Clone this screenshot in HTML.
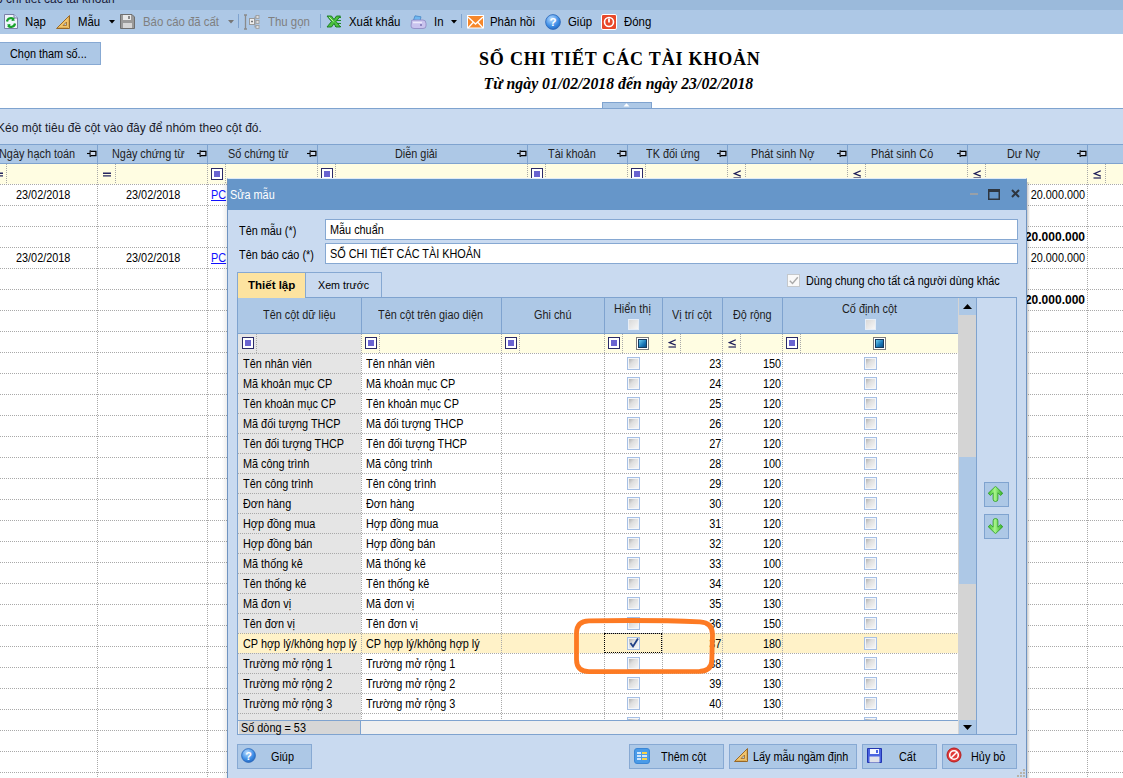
<!DOCTYPE html><html><head><meta charset="utf-8"><style>
*{margin:0;padding:0;box-sizing:border-box}
html,body{width:1123px;height:778px;overflow:hidden;background:#fff;position:relative;font-family:"Liberation Sans",sans-serif;font-size:12px;color:#000}
.ab{position:absolute}
.t{position:absolute;white-space:nowrap;line-height:1;transform:scaleX(.905);transform-origin:0 0;margin-top:-1px}
.n{transform:none;margin-top:0}
.r{transform-origin:100% 0}
.tb{font-size:12.6px;top:17px}
.gray{color:#8a8a8a}
.hd{top:149px;color:#1e1e1e}
.dotv{position:absolute;width:1px;background-image:linear-gradient(to bottom,#a9a9a9 50%,transparent 50%);background-size:1px 2px}
.doth{position:absolute;height:1px;background-image:linear-gradient(to right,#a9a9a9 50%,transparent 50%);background-size:2px 1px}
.sep{position:absolute;width:1px;background:#7fa3cf}
.fsq{position:absolute;width:12px;height:12px;border:1.5px solid #2a2a68;background:#fff}
.fsq:after{content:"";position:absolute;left:1.5px;top:1.5px;width:6px;height:6px;background:#6a64d0}
.le{position:absolute;font-size:11px;text-decoration:underline;color:#101040}
.cb{position:absolute;width:13px;height:13px;border:1px solid #a6bfe4;background:#f4f6f9}
.cb:after{content:"";position:absolute;left:1px;top:1px;width:9px;height:9px;background:linear-gradient(135deg,#b2b2b2 0%,#dedede 38%,#f6f6f6 100%)}
.btn{position:absolute;background:#adc8e6;border:1px solid #87a9d3}
</style></head><body>
<div class="ab" style="left:0;top:0;width:1123px;height:10px;background:#9bbadb;overflow:hidden"><span class="t n" style="left:-12px;top:-7px;font-size:12px;color:#1a1a3a">Sổ chi tiết các tài khoản</span></div>
<div class="ab" style="left:0;top:10px;width:1123px;height:24px;background:#adc8e6"></div>
<svg class="ab" style="left:4px;top:14px" width="14" height="15" viewBox="0 0 14 15"><path d="M0.5 0.5H10L13.5 4V14.5H0.5Z" fill="#eef4fb" stroke="#7b7fa8"/><path d="M10 0.5V4H13.5" fill="#cfe0f5" stroke="#7b7fa8"/><path d="M3 7.5A4 4 0 0 1 10 5.5" stroke="#17a12a" stroke-width="2.2" fill="none"/><path d="M8.5 3.5L11 6.5L7.5 7Z" fill="#17a12a"/><path d="M11 9.5A4 4 0 0 1 4 11.5" stroke="#17a12a" stroke-width="2.2" fill="none"/><path d="M5.5 13.5L3 10.5L6.5 10Z" fill="#17a12a"/></svg>
<span class="t tb" style="left:25px">Nạp</span>
<svg class="ab" style="left:56px;top:15px" width="14" height="14" viewBox="0 0 14 14"><path d="M13.5 0.5V13.5H0.5Z" fill="#f2c46a" stroke="#9a6a2a"/><path d="M10.5 7V10.5H7Z" fill="#adc8e6" stroke="#9a6a2a" stroke-width="0.8"/><path d="M3 12.5v1M5 12.5v1M7 12.5v1M9 12.5v1M11 12.5v1M12.5 3h1M12.5 5h1M12.5 7h1M12.5 9h1M12.5 11h1" stroke="#8a5a1a" stroke-width="0.8"/></svg>
<span class="t tb" style="left:78px">Mẫu</span>
<svg class="ab" style="left:109px;top:20px" width="6" height="4" viewBox="0 0 6 4"><path d="M0 0H6L3 3.5Z" fill="#000"/></svg>
<svg class="ab" style="left:120px;top:14px" width="15" height="15" viewBox="0 0 15 15"><path d="M0.5 0.5H12L14.5 3V14.5H0.5Z" fill="#9a9a9a" stroke="#6f6f6f"/><rect x="3" y="1" width="8" height="5" fill="#e9e9e9"/><rect x="8" y="2" width="2" height="3" fill="#8a8a8a"/><rect x="3" y="9" width="9" height="5" fill="#d6d6d6"/></svg>
<span class="t tb gray" style="left:143px;color:#7f7f7f">Báo cáo đã cất</span>
<svg class="ab" style="left:228px;top:20px" width="6" height="4" viewBox="0 0 6 4"><path d="M0 0H6L3 3.5Z" fill="#777"/></svg>
<div class="ab" style="left:238px;top:14px;width:1px;height:14px;background:#7fa3cf"></div>
<svg class="ab" style="left:243px;top:14px" width="17" height="16" viewBox="0 0 17 16"><path d="M1 1h3M2.5 1v14M1 15h3" stroke="#8a8a8a" stroke-width="1.3" fill="none"/><rect x="6.5" y="4.5" width="5" height="6" fill="#eee" stroke="#999"/><path d="M8 7.5h2M9 6.5v2" stroke="#777"/><rect x="13" y="1.5" width="3" height="3" fill="#ddd" stroke="#999" stroke-width=".8"/><rect x="13" y="6.5" width="3" height="3" fill="#ddd" stroke="#999" stroke-width=".8"/><rect x="13" y="11.5" width="3" height="3" fill="#ddd" stroke="#999" stroke-width=".8"/><path d="M11.5 3h1.5M11.5 13h1.5M12 3v10" stroke="#999" stroke-width=".8"/></svg>
<span class="t tb" style="left:268px;color:#7f7f7f">Thu gọn</span>
<div class="ab" style="left:320px;top:14px;width:1px;height:14px;background:#7fa3cf"></div>
<svg class="ab" style="left:326px;top:15px" width="16" height="13" viewBox="0 0 16 13"><path d="M9 2.5h6M10 5.5h5M10.5 8.5h4.5M9 11.5h6" stroke="#1f8a2a" stroke-width="1.2"/><path d="M1 1H5.5L8 4.5L10.5 1H14.5L10 6.5L14.5 12H10L8 8.5L5.5 12H1L5.5 6.5Z" fill="#4cc23f" stroke="#17761f" stroke-width="0.9" stroke-linejoin="round"/><path d="M3 2L7.5 6.5" stroke="#b6f3a0" stroke-width="1"/></svg>
<span class="t tb" style="left:349px">Xuất khẩu</span>
<svg class="ab" style="left:410px;top:15px" width="17" height="14" viewBox="0 0 17 14"><path d="M3.5 5L5 0.8L11 1.8L10 6Z" fill="#6fb7f0" stroke="#3f7fc0" stroke-width=".7"/><path d="M1.5 6.5Q1 5 3 5H13Q16 5 16 8.5V11Q16 13.5 13 13.5H4Q1 13.5 1 11Z" fill="#c9c3ee" stroke="#8d86c0" stroke-width=".8"/><path d="M3 7.5H12" stroke="#ece9fb" stroke-width="1.5"/><rect x="10" y="9" width="2" height="2" fill="#8d86c0"/></svg>
<span class="t tb" style="left:434px">In</span>
<svg class="ab" style="left:451px;top:20px" width="6" height="4" viewBox="0 0 6 4"><path d="M0 0H6L3 3.5Z" fill="#000"/></svg>
<div class="ab" style="left:461px;top:14px;width:1px;height:14px;background:#7fa3cf"></div>
<svg class="ab" style="left:467px;top:15px" width="17" height="14" viewBox="0 0 17 14"><rect x="0.5" y="0.5" width="16" height="12.5" fill="#f6872a" stroke="#fff"/><path d="M1 2L8.5 9L16 2M1 13L6 7.5M16 13L11 7.5" stroke="#fff" stroke-width="1.3" fill="none"/></svg>
<span class="t tb" style="left:490px">Phản hồi</span>
<svg class="ab" style="left:545px;top:14px" width="16" height="16" viewBox="0 0 16 16"><defs><radialGradient id="hg545" cx=".4" cy=".3" r=".8"><stop offset="0" stop-color="#b8dbff"/><stop offset=".6" stop-color="#3d8ee6"/><stop offset="1" stop-color="#1f5fb8"/></radialGradient></defs><circle cx="8.0" cy="8.0" r="7.4" fill="url(#hg545)" stroke="#2a66b8" stroke-width=".8"/><text x="8.0" y="12.48" font-family="Liberation Sans" font-weight="bold" font-size="11.52" fill="#fff" text-anchor="middle">?</text></svg>
<span class="t tb" style="left:568px">Giúp</span>
<svg class="ab" style="left:601px;top:14px" width="16" height="16" viewBox="0 0 16 16"><rect x="0.5" y="0.5" width="15" height="15" rx="1.5" fill="#e8482a" stroke="#fff"/><circle cx="8" cy="8" r="4.5" fill="none" stroke="#fff" stroke-width="1.6"/><path d="M8 4.5v4" stroke="#fff" stroke-width="1.8"/></svg>
<span class="t tb" style="left:624px">Đóng</span>
<div class="btn" style="left:-1px;top:42px;width:102px;height:23px"></div>
<span class="t" style="left:10px;top:49px">Chọn tham số...</span>
<span class="t n" style="left:479px;top:50px;font-family:'Liberation Serif',serif;font-weight:bold;font-size:18px;letter-spacing:0.8px">SỔ CHI TIẾT CÁC TÀI KHOẢN</span>
<span class="t n" style="left:483.5px;top:76px;font-family:'Liberation Serif',serif;font-weight:bold;font-style:italic;font-size:15.8px">Từ ngày 01/02/2018 đến ngày 23/02/2018</span>
<div class="ab" style="left:602px;top:102px;width:50px;height:7px;background:#adc8e6;border:1px solid #7fa3cf;border-bottom:none"></div>
<svg class="ab" style="left:623px;top:103px" width="7" height="4" viewBox="0 0 7 4"><path d="M0.5 3.6L3.5 0.3L6.5 3.6Z" fill="#fff"/></svg>
<div class="ab" style="left:0;top:108px;width:1123px;height:37px;background:#c9daf0;border-top:1px solid #7fa3cf"></div>
<span class="t n" style="left:-3px;top:122px;font-size:12px;color:#1a1a2a">Kéo một tiêu đề cột vào đây để nhóm theo cột đó.</span>
<div class="ab" style="left:0;top:144px;width:1123px;height:20px;background:#adc8e6;border-top:1px solid #7fa3cf;border-bottom:1px solid #7fa3cf"></div>
<div class="sep" style="left:97px;top:145px;height:18px"></div>
<div class="sep" style="left:207px;top:145px;height:18px"></div>
<div class="sep" style="left:317px;top:145px;height:18px"></div>
<div class="sep" style="left:527px;top:145px;height:18px"></div>
<div class="sep" style="left:627px;top:145px;height:18px"></div>
<div class="sep" style="left:727px;top:145px;height:18px"></div>
<div class="sep" style="left:847px;top:145px;height:18px"></div>
<div class="sep" style="left:967px;top:145px;height:18px"></div>
<div class="sep" style="left:1087px;top:145px;height:18px"></div>
<span class="t hd" style="left:-1px">Ngày hạch toán</span>
<span class="t hd" style="left:112px">Ngày chứng từ</span>
<span class="t hd" style="left:228px">Số chứng từ</span>
<span class="t hd" style="left:395px">Diễn giải</span>
<span class="t hd" style="left:548px">Tài khoản</span>
<span class="t hd" style="left:646px">TK đối ứng</span>
<span class="t hd" style="left:751px">Phát sinh Nợ</span>
<span class="t hd" style="left:871px">Phát sinh Có</span>
<span class="t hd" style="left:1007px">Dư Nợ</span>
<svg class="ab" style="left:87px;top:150px" width="10" height="8" viewBox="0 0 10 8"><path d="M0 3.5H3" stroke="#000" stroke-width="1.1"/><path d="M3.3 0.4V6.8" stroke="#000" stroke-width="1.5"/><path d="M3.6 1.3H8.9V5.7H3.6" fill="#cfdcee" stroke="#000" stroke-width="1.25"/></svg>
<svg class="ab" style="left:197px;top:150px" width="10" height="8" viewBox="0 0 10 8"><path d="M0 3.5H3" stroke="#000" stroke-width="1.1"/><path d="M3.3 0.4V6.8" stroke="#000" stroke-width="1.5"/><path d="M3.6 1.3H8.9V5.7H3.6" fill="#cfdcee" stroke="#000" stroke-width="1.25"/></svg>
<svg class="ab" style="left:307px;top:150px" width="10" height="8" viewBox="0 0 10 8"><path d="M0 3.5H3" stroke="#000" stroke-width="1.1"/><path d="M3.3 0.4V6.8" stroke="#000" stroke-width="1.5"/><path d="M3.6 1.3H8.9V5.7H3.6" fill="#cfdcee" stroke="#000" stroke-width="1.25"/></svg>
<svg class="ab" style="left:517px;top:150px" width="10" height="8" viewBox="0 0 10 8"><path d="M0 3.5H3" stroke="#000" stroke-width="1.1"/><path d="M3.3 0.4V6.8" stroke="#000" stroke-width="1.5"/><path d="M3.6 1.3H8.9V5.7H3.6" fill="#cfdcee" stroke="#000" stroke-width="1.25"/></svg>
<svg class="ab" style="left:617px;top:150px" width="10" height="8" viewBox="0 0 10 8"><path d="M0 3.5H3" stroke="#000" stroke-width="1.1"/><path d="M3.3 0.4V6.8" stroke="#000" stroke-width="1.5"/><path d="M3.6 1.3H8.9V5.7H3.6" fill="#cfdcee" stroke="#000" stroke-width="1.25"/></svg>
<svg class="ab" style="left:717px;top:150px" width="10" height="8" viewBox="0 0 10 8"><path d="M0 3.5H3" stroke="#000" stroke-width="1.1"/><path d="M3.3 0.4V6.8" stroke="#000" stroke-width="1.5"/><path d="M3.6 1.3H8.9V5.7H3.6" fill="#cfdcee" stroke="#000" stroke-width="1.25"/></svg>
<svg class="ab" style="left:837px;top:150px" width="10" height="8" viewBox="0 0 10 8"><path d="M0 3.5H3" stroke="#000" stroke-width="1.1"/><path d="M3.3 0.4V6.8" stroke="#000" stroke-width="1.5"/><path d="M3.6 1.3H8.9V5.7H3.6" fill="#cfdcee" stroke="#000" stroke-width="1.25"/></svg>
<svg class="ab" style="left:957px;top:150px" width="10" height="8" viewBox="0 0 10 8"><path d="M0 3.5H3" stroke="#000" stroke-width="1.1"/><path d="M3.3 0.4V6.8" stroke="#000" stroke-width="1.5"/><path d="M3.6 1.3H8.9V5.7H3.6" fill="#cfdcee" stroke="#000" stroke-width="1.25"/></svg>
<svg class="ab" style="left:1077px;top:150px" width="10" height="8" viewBox="0 0 10 8"><path d="M0 3.5H3" stroke="#000" stroke-width="1.1"/><path d="M3.3 0.4V6.8" stroke="#000" stroke-width="1.5"/><path d="M3.6 1.3H8.9V5.7H3.6" fill="#cfdcee" stroke="#000" stroke-width="1.25"/></svg>
<div class="ab" style="left:0;top:164px;width:1123px;height:20px;background:#fffde2"></div>
<svg class="ab" style="left:-5px;top:171px" width="9" height="7" viewBox="0 0 9 7"><path d="M0 2.3H8M0 4.9H8" stroke="#25255f" stroke-width="1.4"/></svg>
<div class="dotv" style="left:6px;top:164px;height:20px"></div>
<svg class="ab" style="left:103px;top:171px" width="9" height="7" viewBox="0 0 9 7"><path d="M0 2.3H8M0 4.9H8" stroke="#25255f" stroke-width="1.4"/></svg>
<div class="dotv" style="left:115px;top:164px;height:20px"></div>
<div class="fsq" style="left:211px;top:168px"></div>
<div class="dotv" style="left:225px;top:164px;height:20px"></div>
<div class="fsq" style="left:321px;top:168px"></div>
<div class="dotv" style="left:335px;top:164px;height:20px"></div>
<div class="fsq" style="left:531px;top:168px"></div>
<div class="dotv" style="left:545px;top:164px;height:20px"></div>
<div class="fsq" style="left:631px;top:168px"></div>
<div class="dotv" style="left:645px;top:164px;height:20px"></div>
<svg class="ab" style="left:733px;top:170px" width="9" height="9" viewBox="0 0 9 9"><path d="M7.8 0.8L1.3 3.6L7.8 6.2" stroke="#1e1e58" stroke-width="1.25" fill="none"/><path d="M0.5 8H8" stroke="#1e1e58" stroke-width="1.2"/></svg>
<div class="dotv" style="left:745px;top:164px;height:20px"></div>
<svg class="ab" style="left:853px;top:170px" width="9" height="9" viewBox="0 0 9 9"><path d="M7.8 0.8L1.3 3.6L7.8 6.2" stroke="#1e1e58" stroke-width="1.25" fill="none"/><path d="M0.5 8H8" stroke="#1e1e58" stroke-width="1.2"/></svg>
<div class="dotv" style="left:865px;top:164px;height:20px"></div>
<svg class="ab" style="left:973px;top:170px" width="9" height="9" viewBox="0 0 9 9"><path d="M7.8 0.8L1.3 3.6L7.8 6.2" stroke="#1e1e58" stroke-width="1.25" fill="none"/><path d="M0.5 8H8" stroke="#1e1e58" stroke-width="1.2"/></svg>
<div class="dotv" style="left:985px;top:164px;height:20px"></div>
<svg class="ab" style="left:1093px;top:170px" width="9" height="9" viewBox="0 0 9 9"><path d="M7.8 0.8L1.3 3.6L7.8 6.2" stroke="#1e1e58" stroke-width="1.25" fill="none"/><path d="M0.5 8H8" stroke="#1e1e58" stroke-width="1.2"/></svg>
<div class="dotv" style="left:1105px;top:164px;height:20px"></div>
<div class="doth" style="left:0;top:184px;width:1123px"></div>
<div class="doth" style="left:0;top:205px;width:1123px"></div>
<div class="doth" style="left:0;top:226px;width:1123px"></div>
<div class="doth" style="left:0;top:247px;width:1123px"></div>
<div class="doth" style="left:0;top:268px;width:1123px"></div>
<div class="doth" style="left:0;top:289px;width:1123px"></div>
<div class="doth" style="left:0;top:310px;width:1123px"></div>
<div class="doth" style="left:0;top:331px;width:1123px"></div>
<div class="doth" style="left:0;top:352px;width:1123px"></div>
<div class="doth" style="left:0;top:373px;width:1123px"></div>
<div class="doth" style="left:0;top:394px;width:1123px"></div>
<div class="doth" style="left:0;top:415px;width:1123px"></div>
<div class="doth" style="left:0;top:436px;width:1123px"></div>
<div class="doth" style="left:0;top:457px;width:1123px"></div>
<div class="doth" style="left:0;top:478px;width:1123px"></div>
<div class="doth" style="left:0;top:499px;width:1123px"></div>
<div class="doth" style="left:0;top:520px;width:1123px"></div>
<div class="doth" style="left:0;top:541px;width:1123px"></div>
<div class="doth" style="left:0;top:562px;width:1123px"></div>
<div class="doth" style="left:0;top:583px;width:1123px"></div>
<div class="doth" style="left:0;top:604px;width:1123px"></div>
<div class="doth" style="left:0;top:625px;width:1123px"></div>
<div class="doth" style="left:0;top:646px;width:1123px"></div>
<div class="doth" style="left:0;top:667px;width:1123px"></div>
<div class="doth" style="left:0;top:688px;width:1123px"></div>
<div class="doth" style="left:0;top:709px;width:1123px"></div>
<div class="doth" style="left:0;top:730px;width:1123px"></div>
<div class="doth" style="left:0;top:751px;width:1123px"></div>
<div class="doth" style="left:0;top:772px;width:1123px"></div>
<div class="dotv" style="left:97px;top:164px;height:614px"></div>
<div class="dotv" style="left:207px;top:164px;height:614px"></div>
<div class="dotv" style="left:317px;top:164px;height:614px"></div>
<div class="dotv" style="left:527px;top:164px;height:614px"></div>
<div class="dotv" style="left:627px;top:164px;height:614px"></div>
<div class="dotv" style="left:727px;top:164px;height:614px"></div>
<div class="dotv" style="left:847px;top:164px;height:614px"></div>
<div class="dotv" style="left:967px;top:164px;height:614px"></div>
<div class="dotv" style="left:1087px;top:164px;height:614px"></div>
<span class="t" style="left:16px;top:190px">23/02/2018</span>
<span class="t" style="left:126px;top:190px">23/02/2018</span>
<span class="t" style="left:211px;top:190px;color:#1010ff;text-decoration:underline">PC</span>
<span class="t r" style="right:38px;top:190px">20.000.000</span>
<span class="t n" style="right:38px;top:231px;font-weight:bold;font-size:12px">20.000.000</span>
<span class="t" style="left:16px;top:253px">23/02/2018</span>
<span class="t" style="left:126px;top:253px">23/02/2018</span>
<span class="t" style="left:211px;top:253px;color:#1010ff;text-decoration:underline">PC</span>
<span class="t r" style="right:38px;top:253px">20.000.000</span>
<span class="t n" style="right:38px;top:294px;font-weight:bold;font-size:12px">20.000.000</span>
<div class="ab" style="left:1026px;top:182px;width:4px;height:600px;background:linear-gradient(to right,rgba(0,0,0,.28),rgba(0,0,0,0))"></div>
<div class="ab" style="left:222px;top:182px;width:5px;height:600px;background:linear-gradient(to left,rgba(0,0,0,.07),rgba(0,0,0,0))"></div>
<div class="ab" style="left:227px;top:178px;width:800px;height:610px;background:#c9daf0;border:1px solid #6f93c0;border-top:1px solid #e0ebf7"></div>
<div class="ab" style="left:228px;top:179px;width:798px;height:31px;background:#6696c9"></div>
<span class="t" style="left:230px;top:190px;color:#fff">Sửa mẫu</span>
<div class="ab" style="left:970px;top:193px;width:8px;height:2px;background:#98a0a8"></div>
<svg class="ab" style="left:988px;top:189px" width="12" height="11" viewBox="0 0 12 11"><rect x="0.75" y="0.75" width="10.5" height="9.5" fill="none" stroke="#2e3640" stroke-width="1.5"/><rect x="0" y="0" width="12" height="3" fill="#2e3640"/></svg>
<svg class="ab" style="left:1011px;top:189px" width="9" height="9" viewBox="0 0 9 9"><path d="M1 1L8 8M8 1L1 8" stroke="#2e3640" stroke-width="2"/></svg>
<span class="t" style="left:239px;top:226px">Tên mẫu (*)</span>
<span class="t" style="left:239px;top:250px">Tên báo cáo (*)</span>
<div class="ab" style="left:325px;top:219px;width:693px;height:21px;background:#fff;border:1px solid #86a8d2"></div>
<div class="ab" style="left:325px;top:243px;width:693px;height:21px;background:#fff;border:1px solid #86a8d2"></div>
<span class="t" style="left:330px;top:225px">Mẫu chuẩn</span>
<span class="t" style="left:330px;top:249px">SỔ CHI TIẾT CÁC TÀI KHOẢN</span>
<div class="ab" style="left:787px;top:274px;width:13px;height:13px;border:1px solid #c4c8cc;background:#f9f9f9"></div>
<svg class="ab" style="left:788px;top:275px" width="11" height="11" viewBox="0 0 11 11"><path d="M1.8 5.8L4.5 8.5L9.8 2.2" stroke="#aaaaaa" stroke-width="1.4" fill="none"/></svg>
<span class="t" style="left:806px;top:276px">Dùng chung cho tất cả người dùng khác</span>
<div class="ab" style="left:237px;top:272px;width:69px;height:26px;background:#fde3a0;border:1px solid #86a8d2;border-bottom:none"></div>
<div class="ab" style="left:305px;top:272px;width:77px;height:26px;background:#c9daf0;border:1px solid #86a8d2;border-bottom:none"></div>
<span class="t n" style="left:248px;top:280px;font-weight:bold;font-size:11.5px">Thiết lập</span>
<span class="t n" style="left:318px;top:280px;font-size:10.7px">Xem trước</span>
<div class="ab" style="left:237px;top:297px;width:780px;height:438px;background:#fff;border:1px solid #7fa3cf"></div>
<div class="ab" style="left:238px;top:297px;width:67px;height:1px;background:#fde3a0"></div>
<div class="ab" style="left:238px;top:298px;width:720px;height:36px;background:#adc8e6;border-bottom:1px solid #7fa3cf"></div>
<div class="sep" style="left:361px;top:298px;height:35px"></div>
<div class="sep" style="left:501px;top:298px;height:35px"></div>
<div class="sep" style="left:604px;top:298px;height:35px"></div>
<div class="sep" style="left:662px;top:298px;height:35px"></div>
<div class="sep" style="left:722px;top:298px;height:35px"></div>
<div class="sep" style="left:782px;top:298px;height:35px"></div>
<span class="t" style="left:263px;top:310px;color:#1e1e1e">Tên cột dữ liệu</span>
<span class="t" style="left:378px;top:310px;color:#1e1e1e">Tên cột trên giao diện</span>
<span class="t" style="left:534px;top:310px;color:#1e1e1e">Ghi chú</span>
<span class="t" style="left:672px;top:310px;color:#1e1e1e">Vị trí cột</span>
<span class="t" style="left:733px;top:310px;color:#1e1e1e">Độ rộng</span>
<span class="t" style="left:614px;top:304px;color:#1e1e1e">Hiển thị</span>
<span class="t" style="left:842px;top:304px;color:#1e1e1e">Cố định cột</span>
<div class="ab" style="left:628px;top:319px;width:11px;height:11px;border:1px solid #e6eef8;background:linear-gradient(135deg,#d9d9d9,#f7f7f7)"></div>
<div class="ab" style="left:865px;top:319px;width:11px;height:11px;border:1px solid #e6eef8;background:linear-gradient(135deg,#d9d9d9,#f7f7f7)"></div>
<div class="ab" style="left:238px;top:334px;width:720px;height:19px;background:#fffde2"></div>
<div class="ab" style="left:238px;top:334px;width:123px;height:386px;background:#e5e5e5"></div>
<div class="fsq" style="left:242px;top:337px"></div>
<div class="dotv" style="left:256px;top:334px;height:19px"></div>
<div class="fsq" style="left:365px;top:337px"></div>
<div class="dotv" style="left:379px;top:334px;height:19px"></div>
<div class="fsq" style="left:505px;top:337px"></div>
<div class="dotv" style="left:519px;top:334px;height:19px"></div>
<div class="fsq" style="left:608px;top:337px"></div>
<div class="dotv" style="left:622px;top:334px;height:19px"></div>
<div class="fsq" style="left:786px;top:337px"></div>
<div class="dotv" style="left:800px;top:334px;height:19px"></div>
<div class="ab" style="left:636px;top:337px;width:13px;height:13px;border:1px solid #7a7a7a;background:#fff;padding:1px"><div style="width:9px;height:9px;border:1px solid #153a5c;background:linear-gradient(135deg,#6fd0f2,#1a78b8 60%,#0c4f86)"></div></div>
<div class="ab" style="left:873px;top:337px;width:13px;height:13px;border:1px solid #7a7a7a;background:#fff;padding:1px"><div style="width:9px;height:9px;border:1px solid #153a5c;background:linear-gradient(135deg,#6fd0f2,#1a78b8 60%,#0c4f86)"></div></div>
<svg class="ab" style="left:668px;top:339px" width="9" height="9" viewBox="0 0 9 9"><path d="M7.8 0.8L1.3 3.6L7.8 6.2" stroke="#1e1e58" stroke-width="1.25" fill="none"/><path d="M0.5 8H8" stroke="#1e1e58" stroke-width="1.2"/></svg>
<div class="dotv" style="left:680px;top:334px;height:19px"></div>
<svg class="ab" style="left:728px;top:339px" width="9" height="9" viewBox="0 0 9 9"><path d="M7.8 0.8L1.3 3.6L7.8 6.2" stroke="#1e1e58" stroke-width="1.25" fill="none"/><path d="M0.5 8H8" stroke="#1e1e58" stroke-width="1.2"/></svg>
<div class="dotv" style="left:740px;top:334px;height:19px"></div>
<div class="doth" style="left:238px;top:353px;width:720px"></div>
<span class="t" style="left:243px;top:359px">Tên nhân viên</span>
<span class="t" style="left:366px;top:359px">Tên nhân viên</span>
<span class="t r" style="right:402px;top:359px">23</span>
<span class="t r" style="right:342px;top:359px">150</span>
<div class="cb" style="left:627px;top:357px"></div>
<div class="cb" style="left:864px;top:357px"></div>
<div class="doth" style="left:238px;top:373px;width:720px"></div>
<span class="t" style="left:243px;top:379px">Mã khoản mục CP</span>
<span class="t" style="left:366px;top:379px">Mã khoản mục CP</span>
<span class="t r" style="right:402px;top:379px">24</span>
<span class="t r" style="right:342px;top:379px">120</span>
<div class="cb" style="left:627px;top:377px"></div>
<div class="cb" style="left:864px;top:377px"></div>
<div class="doth" style="left:238px;top:393px;width:720px"></div>
<span class="t" style="left:243px;top:399px">Tên khoản mục CP</span>
<span class="t" style="left:366px;top:399px">Tên khoản mục CP</span>
<span class="t r" style="right:402px;top:399px">25</span>
<span class="t r" style="right:342px;top:399px">120</span>
<div class="cb" style="left:627px;top:397px"></div>
<div class="cb" style="left:864px;top:397px"></div>
<div class="doth" style="left:238px;top:413px;width:720px"></div>
<span class="t" style="left:243px;top:419px">Mã đối tượng THCP</span>
<span class="t" style="left:366px;top:419px">Mã đối tượng THCP</span>
<span class="t r" style="right:402px;top:419px">26</span>
<span class="t r" style="right:342px;top:419px">120</span>
<div class="cb" style="left:627px;top:417px"></div>
<div class="cb" style="left:864px;top:417px"></div>
<div class="doth" style="left:238px;top:433px;width:720px"></div>
<span class="t" style="left:243px;top:439px">Tên đối tượng THCP</span>
<span class="t" style="left:366px;top:439px">Tên đối tượng THCP</span>
<span class="t r" style="right:402px;top:439px">27</span>
<span class="t r" style="right:342px;top:439px">120</span>
<div class="cb" style="left:627px;top:437px"></div>
<div class="cb" style="left:864px;top:437px"></div>
<div class="doth" style="left:238px;top:453px;width:720px"></div>
<span class="t" style="left:243px;top:459px">Mã công trình</span>
<span class="t" style="left:366px;top:459px">Mã công trình</span>
<span class="t r" style="right:402px;top:459px">28</span>
<span class="t r" style="right:342px;top:459px">100</span>
<div class="cb" style="left:627px;top:457px"></div>
<div class="cb" style="left:864px;top:457px"></div>
<div class="doth" style="left:238px;top:473px;width:720px"></div>
<span class="t" style="left:243px;top:479px">Tên công trình</span>
<span class="t" style="left:366px;top:479px">Tên công trình</span>
<span class="t r" style="right:402px;top:479px">29</span>
<span class="t r" style="right:342px;top:479px">120</span>
<div class="cb" style="left:627px;top:477px"></div>
<div class="cb" style="left:864px;top:477px"></div>
<div class="doth" style="left:238px;top:493px;width:720px"></div>
<span class="t" style="left:243px;top:499px">Đơn hàng</span>
<span class="t" style="left:366px;top:499px">Đơn hàng</span>
<span class="t r" style="right:402px;top:499px">30</span>
<span class="t r" style="right:342px;top:499px">120</span>
<div class="cb" style="left:627px;top:497px"></div>
<div class="cb" style="left:864px;top:497px"></div>
<div class="doth" style="left:238px;top:513px;width:720px"></div>
<span class="t" style="left:243px;top:519px">Hợp đồng mua</span>
<span class="t" style="left:366px;top:519px">Hợp đồng mua</span>
<span class="t r" style="right:402px;top:519px">31</span>
<span class="t r" style="right:342px;top:519px">120</span>
<div class="cb" style="left:627px;top:517px"></div>
<div class="cb" style="left:864px;top:517px"></div>
<div class="doth" style="left:238px;top:533px;width:720px"></div>
<span class="t" style="left:243px;top:539px">Hợp đồng bán</span>
<span class="t" style="left:366px;top:539px">Hợp đồng bán</span>
<span class="t r" style="right:402px;top:539px">32</span>
<span class="t r" style="right:342px;top:539px">120</span>
<div class="cb" style="left:627px;top:537px"></div>
<div class="cb" style="left:864px;top:537px"></div>
<div class="doth" style="left:238px;top:553px;width:720px"></div>
<span class="t" style="left:243px;top:559px">Mã thống kê</span>
<span class="t" style="left:366px;top:559px">Mã thống kê</span>
<span class="t r" style="right:402px;top:559px">33</span>
<span class="t r" style="right:342px;top:559px">100</span>
<div class="cb" style="left:627px;top:557px"></div>
<div class="cb" style="left:864px;top:557px"></div>
<div class="doth" style="left:238px;top:573px;width:720px"></div>
<span class="t" style="left:243px;top:579px">Tên thống kê</span>
<span class="t" style="left:366px;top:579px">Tên thống kê</span>
<span class="t r" style="right:402px;top:579px">34</span>
<span class="t r" style="right:342px;top:579px">120</span>
<div class="cb" style="left:627px;top:577px"></div>
<div class="cb" style="left:864px;top:577px"></div>
<div class="doth" style="left:238px;top:593px;width:720px"></div>
<span class="t" style="left:243px;top:599px">Mã đơn vị</span>
<span class="t" style="left:366px;top:599px">Mã đơn vị</span>
<span class="t r" style="right:402px;top:599px">35</span>
<span class="t r" style="right:342px;top:599px">130</span>
<div class="cb" style="left:627px;top:597px"></div>
<div class="cb" style="left:864px;top:597px"></div>
<div class="doth" style="left:238px;top:613px;width:720px"></div>
<span class="t" style="left:243px;top:619px">Tên đơn vị</span>
<span class="t" style="left:366px;top:619px">Tên đơn vị</span>
<span class="t r" style="right:402px;top:619px">36</span>
<span class="t r" style="right:342px;top:619px">150</span>
<div class="cb" style="left:627px;top:617px"></div>
<div class="cb" style="left:864px;top:617px"></div>
<div class="ab" style="left:238px;top:633px;width:720px;height:20px;background:#fff2c8"></div>
<div class="doth" style="left:238px;top:633px;width:720px"></div>
<span class="t" style="left:243px;top:639px">CP hợp lý/không hợp lý</span>
<span class="t" style="left:366px;top:639px">CP hợp lý/không hợp lý</span>
<span class="t r" style="right:402px;top:639px">37</span>
<span class="t r" style="right:342px;top:639px">180</span>
<div class="cb" style="left:627px;top:637px"></div>
<div class="cb" style="left:864px;top:637px"></div>
<div class="doth" style="left:238px;top:653px;width:720px"></div>
<span class="t" style="left:243px;top:659px">Trường mở rộng 1</span>
<span class="t" style="left:366px;top:659px">Trường mở rộng 1</span>
<span class="t r" style="right:402px;top:659px">38</span>
<span class="t r" style="right:342px;top:659px">130</span>
<div class="cb" style="left:627px;top:657px"></div>
<div class="cb" style="left:864px;top:657px"></div>
<div class="doth" style="left:238px;top:673px;width:720px"></div>
<span class="t" style="left:243px;top:679px">Trường mở rộng 2</span>
<span class="t" style="left:366px;top:679px">Trường mở rộng 2</span>
<span class="t r" style="right:402px;top:679px">39</span>
<span class="t r" style="right:342px;top:679px">130</span>
<div class="cb" style="left:627px;top:677px"></div>
<div class="cb" style="left:864px;top:677px"></div>
<div class="doth" style="left:238px;top:693px;width:720px"></div>
<span class="t" style="left:243px;top:699px">Trường mở rộng 3</span>
<span class="t" style="left:366px;top:699px">Trường mở rộng 3</span>
<span class="t r" style="right:402px;top:699px">40</span>
<span class="t r" style="right:342px;top:699px">130</span>
<div class="cb" style="left:627px;top:697px"></div>
<div class="cb" style="left:864px;top:697px"></div>
<div class="doth" style="left:238px;top:713px;width:720px"></div>
<div class="cb" style="left:627px;top:717px;height:3px"></div><div class="cb" style="left:864px;top:717px;height:3px"></div>
<div class="dotv" style="left:361px;top:334px;height:386px"></div>
<div class="dotv" style="left:501px;top:334px;height:386px"></div>
<div class="dotv" style="left:604px;top:334px;height:386px"></div>
<div class="dotv" style="left:662px;top:334px;height:386px"></div>
<div class="dotv" style="left:722px;top:334px;height:386px"></div>
<div class="dotv" style="left:782px;top:334px;height:386px"></div>
<div class="ab" style="left:604px;top:633px;width:58px;height:20px;border:1px dotted #000"></div>
<svg class="ab" style="left:628px;top:637px" width="12" height="12" viewBox="0 0 12 12"><path d="M2.5 6L5 9.5L10 1.5" stroke="#1f3f86" stroke-width="1.8" fill="none"/></svg>
<div class="ab" style="left:238px;top:720px;width:720px;height:14px;background:#efefef;border-top:1px solid #7fa3cf"></div>
<div class="ab" style="left:239px;top:721px;width:122px;height:13px;background:#d6d6d6;border-right:1px solid #7fa3cf"></div>
<span class="t" style="left:241px;top:723px">Số dòng = 53</span>
<div class="ab" style="left:958px;top:298px;width:18px;height:436px;background:#d4d4d4"></div>
<div class="ab" style="left:959px;top:298px;width:17px;height:17px;background:#adc8e6"></div>
<svg class="ab" style="left:963px;top:304px" width="9" height="5" viewBox="0 0 9 5"><path d="M0 5L4.5 0L9 5Z" fill="#000"/></svg>
<div class="ab" style="left:959px;top:457px;width:17px;height:127px;background:#adc8e6"></div>
<div class="ab" style="left:959px;top:720px;width:17px;height:14px;background:#adc8e6"></div>
<svg class="ab" style="left:963px;top:725px" width="9" height="5" viewBox="0 0 9 5"><path d="M0 0L9 0L4.5 5Z" fill="#000"/></svg>
<div class="ab" style="left:976px;top:297px;width:41px;height:438px;background:#c9daf0;border:1px solid #7fa3cf"></div>
<div class="ab" style="left:984px;top:482px;width:25px;height:25px;background:#adc8e6;border:1px solid #7fa3cf"></div>
<svg class="ab" style="left:988px;top:486px" width="15" height="16" viewBox="0 0 15 16"><defs><linearGradient id="ag482" x1="0" y1="0" x2="1" y2="0"><stop offset="0" stop-color="#3cbf2c"/><stop offset=".45" stop-color="#a8f58c"/><stop offset="1" stop-color="#2fae22"/></linearGradient></defs><g><path d="M7.5 0.3L14.8 7.3L12.6 9.5L9.9 6.8V13.2Q9.9 15.5 7.5 15.5Q5.1 15.5 5.1 13.2V6.8L2.4 9.5L0.2 7.3Z" fill="url(#ag482)" stroke="#2b9a1f" stroke-width=".8" stroke-linejoin="round"/></g></svg>
<div class="ab" style="left:984px;top:514px;width:25px;height:25px;background:#adc8e6;border:1px solid #7fa3cf"></div>
<svg class="ab" style="left:988px;top:518px" width="15" height="16" viewBox="0 0 15 16"><defs><linearGradient id="ag514" x1="0" y1="0" x2="1" y2="0"><stop offset="0" stop-color="#3cbf2c"/><stop offset=".45" stop-color="#a8f58c"/><stop offset="1" stop-color="#2fae22"/></linearGradient></defs><g transform="translate(0 16) scale(1 -1)"><path d="M7.5 0.3L14.8 7.3L12.6 9.5L9.9 6.8V13.2Q9.9 15.5 7.5 15.5Q5.1 15.5 5.1 13.2V6.8L2.4 9.5L0.2 7.3Z" fill="url(#ag514)" stroke="#2b9a1f" stroke-width=".8" stroke-linejoin="round"/></g></svg>
<div class="btn" style="left:237px;top:744px;width:75px;height:25px"></div>
<span class="t" style="left:271px;top:752px">Giúp</span>
<svg class="ab" style="left:241px;top:748px" width="15" height="15" viewBox="0 0 15 15"><defs><radialGradient id="hg241" cx=".4" cy=".3" r=".8"><stop offset="0" stop-color="#b8dbff"/><stop offset=".6" stop-color="#3d8ee6"/><stop offset="1" stop-color="#1f5fb8"/></radialGradient></defs><circle cx="7.5" cy="7.5" r="6.9" fill="url(#hg241)" stroke="#2a66b8" stroke-width=".8"/><text x="7.5" y="11.700000000000001" font-family="Liberation Sans" font-weight="bold" font-size="10.799999999999999" fill="#fff" text-anchor="middle">?</text></svg>
<div class="btn" style="left:629px;top:744px;width:95px;height:25px"></div>
<span class="t" style="left:661px;top:752px">Thêm cột</span>
<svg class="ab" style="left:634px;top:748px" width="16" height="16" viewBox="0 0 16 16"><rect x="0.5" y="0.5" width="15" height="15" rx="2.5" fill="#4a9be8" stroke="#3a86d6"/><rect x="3" y="4" width="4" height="2" fill="#cfe6fb"/><rect x="8" y="4" width="5" height="2" fill="#f7d24a"/><rect x="3" y="7" width="4" height="2" fill="#cfe6fb"/><rect x="8" y="7" width="5" height="2" fill="#cfe6fb"/><rect x="3" y="10" width="4" height="2" fill="#cfe6fb"/><rect x="8" y="10" width="5" height="2" fill="#f7d24a"/></svg>
<div class="btn" style="left:729px;top:744px;width:128px;height:25px"></div>
<span class="t" style="left:753px;top:752px">Lấy mẫu ngầm định</span>
<svg class="ab" style="left:734px;top:748px" width="14" height="14" viewBox="0 0 14 14"><path d="M13.5 0.5V13.5H0.5Z" fill="#f2c46a" stroke="#9a6a2a"/><path d="M10.5 7V10.5H7Z" fill="#adc8e6" stroke="#9a6a2a" stroke-width="0.8"/><path d="M3 12.5v1M5 12.5v1M7 12.5v1M9 12.5v1M11 12.5v1M12.5 3h1M12.5 5h1M12.5 7h1M12.5 9h1M12.5 11h1" stroke="#8a5a1a" stroke-width="0.8"/></svg>
<div class="btn" style="left:862px;top:744px;width:75px;height:25px"></div>
<span class="t" style="left:899px;top:752px">Cất</span>
<svg class="ab" style="left:867px;top:748px" width="15" height="15" viewBox="0 0 15 15"><path d="M0.5 0.5H14.5V14.5H0.5Z" fill="#4a63e0" stroke="#2236b0"/><rect x="3" y="1" width="9" height="5" fill="#f4f6ff"/><rect x="9" y="2" width="2" height="3" fill="#4a63e0"/><rect x="2.5" y="8.5" width="10" height="6" fill="#dfe1ea"/></svg>
<div class="btn" style="left:942px;top:744px;width:75px;height:25px"></div>
<span class="t" style="left:971px;top:752px">Hủy bỏ</span>
<svg class="ab" style="left:946px;top:747px" width="16" height="16" viewBox="0 0 16 16"><circle cx="8" cy="8" r="7" fill="#e23a3a" stroke="#b31c1c"/><circle cx="8" cy="8" r="4.3" fill="none" stroke="#fff" stroke-width="1.6"/><path d="M5 11L11 5" stroke="#fff" stroke-width="1.6"/></svg>
<div class="ab" style="left:1023px;top:769px;width:2px;height:2px;background:#b7b3a8"></div>
<div class="ab" style="left:1023px;top:772px;width:2px;height:2px;background:#b7b3a8"></div>
<div class="ab" style="left:1020px;top:772px;width:2px;height:2px;background:#b7b3a8"></div>
<div class="ab" style="left:1023px;top:775px;width:2px;height:2px;background:#b7b3a8"></div>
<div class="ab" style="left:1020px;top:775px;width:2px;height:2px;background:#b7b3a8"></div>
<div class="ab" style="left:1017px;top:775px;width:2px;height:2px;background:#b7b3a8"></div>
<svg class="ab" style="left:570px;top:614px" width="150" height="64" viewBox="0 0 150 64"><path d="M19 6.8C60 6.2 100 6.5 130 7.8Q142.5 8.5 142.5 20.5L141.8 47Q141.2 57 129.5 57.3L19 57.6Q6.5 57.5 6.5 45.5L6.5 19Q6.6 7 19 6.8Z" fill="none" stroke="#fd7a23" stroke-width="4.8"/></svg>
</body></html>
